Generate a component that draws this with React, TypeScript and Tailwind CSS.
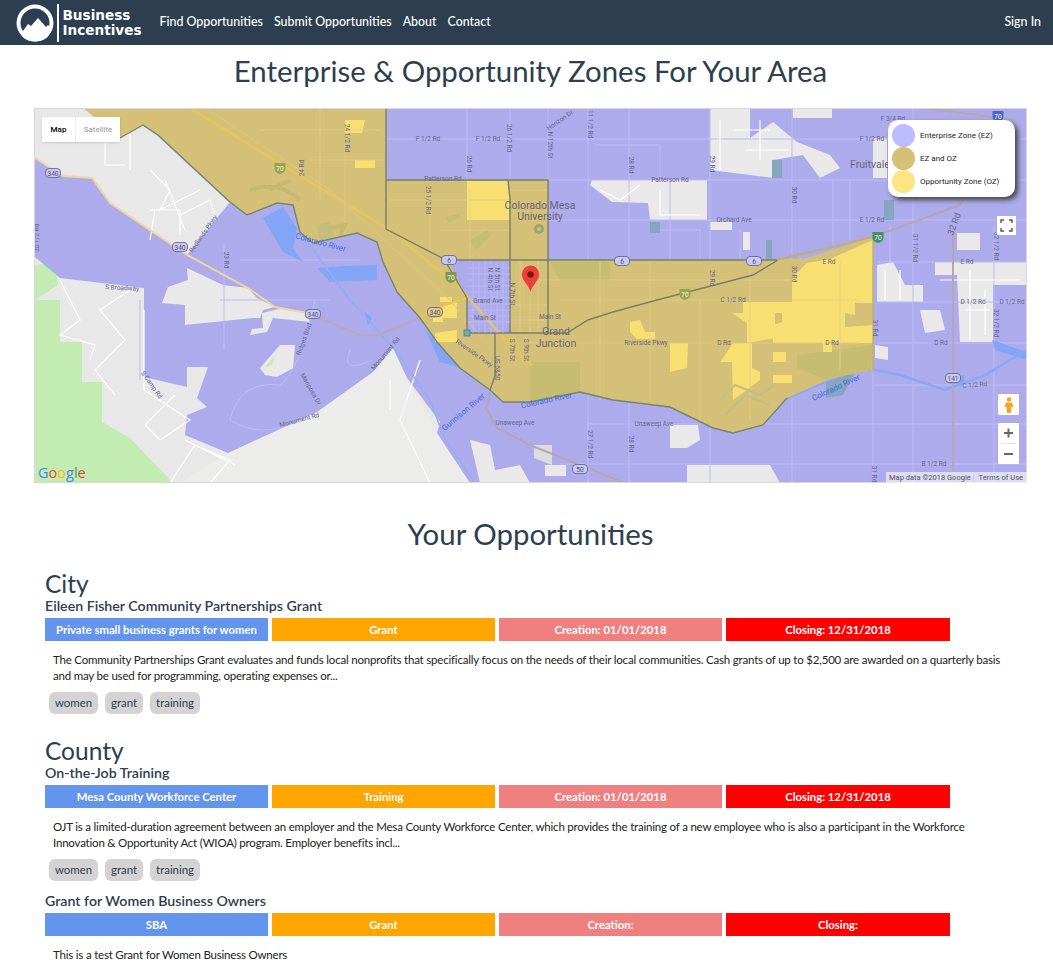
const purple = "35,158 63,176 92,178 110,203 187,255 230,202 230,108 1027,108 1027,483 470,483 437,433 440,422 407,378 393,348 373,372 317,412 228,453 185,435 187,415 207,407 197,398 208,367 187,367 187,387 144,377 144,288 60,278 35,257";

const gold = "83,108 120,138 143,125 158,135 187,162 230,202 247,215 277,203 293,205 300,232 313,243 357,233 377,242 383,262 397,292 420,318 437,342 460,368 490,390 503,402 530,402 580,392 613,400 670,407 713,428 733,433 763,425 787,398 823,382 860,367 873,371 873,237 807,258 777,260 548,260 548,180 386,180 386,108";

const holes = "448,260 510,260 510,333 467,333 467,298";

const grayPatches = [
  "187,268 223,285 248,288 257,298 275,307 263,310 260,318 253,318 185,325 185,305 162,303 168,287 188,280",
  "262,313 283,308 307,313 310,322 273,318 267,332 250,335 252,329 263,328",
  "260,368 280,345 295,345 293,368 277,377 265,375",
  "710,108 750,108 750,138 773,122 797,142 830,155 840,168 820,178 803,155 773,160 773,178 710,170",
  "592,180 707,180 707,220 650,220 648,203 612,202 590,185",
  "710,222 732,222 732,230 710,230",
  "743,232 750,232 750,250 743,250",
  "793,108 832,108 832,118 793,118",
  "877,265 893,262 905,285 923,285 923,302 877,302",
  "935,262 1027,262 1027,285 993,285 993,342 960,342 957,275 935,275",
  "873,138 887,138 887,178 873,178",
  "957,233 980,233 980,250 957,250",
  "670,425 698,425 700,440 687,448 670,448",
  "687,465 770,465 780,483 687,483",
  "470,440 490,445 495,470 520,465 530,483 480,483",
  "875,345 888,347 888,360 875,358",
  "920,310 940,310 945,330 925,333",
  "563,465 566,465 566,476 545,476 545,465",
];

const bluePatches = [
  "263,218 283,207 297,228 293,248 303,262 283,252",
  "317,268 345,266 377,265 377,280 330,282",
  "365,312 372,318 368,325",
  "425,330 437,342 460,368 440,362",
  "950,377 964,375 964,384 950,384",
  "992,340 1027,352 1027,360 995,350",
];

const tealPatches = [
  "826,378 858,367 843,395 826,398",
  "772,160 782,160 782,178 772,178",
  "884,200 894,200 894,220 884,220",
  "650,222 660,222 660,233 650,233",
  "766,240 772,240 772,262 766,262",
];

const yellowPatches = [
  "467,181 508,181 510,220 467,220",
  "345,120 365,120 362,133 345,133",
  "355,160 375,160 375,168 355,168",
  "440,297 452,297 452,302 440,302",
  "437,310 450,303 457,303 457,318 437,318",
  "433,318 443,318 443,322 433,322",
  "435,333 457,330 457,342 435,342",
  "792,278 807,263 830,259 873,240 873,303 855,303 855,315 845,313 845,327 873,325 873,343 832,343 832,352 823,352 823,343 792,343",
  "743,302 792,302 792,343 773,343 773,325 782,322 782,313 775,313 775,338 747,343 747,323 732,313 743,313",
  "733,343 752,343 752,368 760,372 760,380 733,400 732,362 720,362",
  "630,322 640,320 645,332 655,332 655,339 637,339 630,332",
  "670,343 688,343 687,368 670,372",
  "773,352 786,352 786,362 773,362",
  "773,375 792,375 792,383 773,383",
];

const olivePatches = [
  "530,362 580,362 580,393 530,402",
  "550,262 610,262 610,281 560,281",
  "797,355 873,345 871,370 826,380 797,368",
  "470,240 488,230 490,236 476,250",
  "446,217 460,214 460,218 448,222",
];

const lightRoads = [
  "M548 108 V180 M588 108 V483 M629 108 V483 M670 180 V262 M710 108 V483 M792 108 V483 M833 178 V260",
  "M913 108 V483 M873 372 V483 M994 225 V483 M386 108 H548 M386 139 H548 M548 139 H1027 M548 180 H1027",
  "M548 220 H1027 M877 262 H1027 M877 302 H1027 M877 343 H1027 M873 385 H1027 M588 424 H1027 M560 464 H1027",
  "M430 180 V262 M467 108 V180 M510 108 V180 M224 245 V350 M140 380 V300 M240 260 H360 M220 300 H330",
  "M315 300 Q300 370 280 385 Q240 380 230 420 Q260 440 300 420 M350 350 Q340 375 372 360",
  "M595 145 H660 V180 M740 230 V262 M660 230 H700 V262 M850 180 V240 M890 225 V262",
];

const goldRoads = "M548 190 H510 M470 190 V262 M510 200 H390 M510 230 H440 M430 190 V250 M560 300 H860 M600 262 V400 M650 262 V400 M700 300 V420 M750 262 V420 M840 262 V370 M530 280 H790 M530 343 H860 M260 130 H380 M320 108 V200 M345 140 V220 M310 160 H386 M520 260 V333 M530 296 V333 M538 260 V333 M510 305 H548 M510 320 H548";

const grayRoads = [
  "M100 135 H130 V170 M105 140 V165 H125 M150 170 L170 190 L160 210 L200 190 M150 210 H180 V235 M165 180 L185 230 M155 210 L150 240 M180 215 L210 200 L215 215",
  "M60 280 L80 320 L60 335 L95 345 L90 360 M130 290 L100 310 L125 340 L95 370 L115 395 M144 310 V390 L190 420 L160 440 L145 425 L175 395",
  "M170 483 L195 445 L230 460 L210 483 M185 440 L235 465 M390 380 V410 M420 360 L400 420 L430 483",
  "M720 120 V170 M735 130 H770 M745 150 H790 M760 120 V160 M600 190 L620 200 L640 185 M660 190 V215 H700",
  "M885 270 V300 M900 270 V300 M940 280 H1020 M970 270 V340 M985 290 V335 M965 310 H990",
];

const labels: [number, number, string, number?][] = [
  [428, 141, "F 1/2 Rd"], [488, 141, "F 1/2 Rd"], [443, 181, "Patterson Rd"], [670, 182, "Patterson Rd"],
  [734, 222, "Orchard Ave"], [872, 222, "E 1/2 Rd"], [872, 141, "F 1/2 Rd"], [893, 121, "F 3/4 Rd"],
  [829, 264, "E Rd"], [967, 264, "E Rd"], [973, 304, "D 1/2 Rd"], [1012, 304, "D 1/2 Rd"],
  [724, 345, "D Rd"], [832, 345, "D Rd"], [941, 345, "D Rd"], [975, 387, "C 1/2 Rd", -5],
  [934, 466, "B 1/2 Rd"], [646, 345, "Riverside Pkwy"], [654, 426, "Unaweep Ave"], [515, 425, "Unaweep Ave"],
  [485, 320, "Main St"], [550, 319, "Main St"], [488, 303, "Grand Ave"], [122, 290, "S Broadway", 3],
  [304, 168, "24 Rd", -90], [345, 138, "24 1/2 Rd", 90], [426, 200, "25 1/2 Rd", 90], [467, 164, "26 Rd", 90],
  [507, 138, "26 1/2 Rd", 90], [224, 260, "23 Rd", 90], [39, 238, "20 1/2 Rd", -90], [495, 279, "N 5th St", 90],
  [488, 279, "N 4th St", 90], [510, 294, "N 7th St", 90], [548, 145, "N 12th St", 90], [588, 124, "11 1/2 Rd", 90],
  [629, 165, "28 Rd", 90], [710, 164, "29 Rd", 90], [792, 195, "30 Rd", 90], [710, 278, "29 Rd", 90],
  [792, 274, "30 Rd", 90], [913, 248, "31 1/2 Rd", 90], [994, 246, "32 1/2 Rd", 90], [994, 323, "32 1/2 Rd", 90],
  [873, 328, "31 Rd", 90], [588, 444, "27 1/2 Rd", 90], [629, 444, "28 Rd", 90], [872, 474, "31 Rd", 90],
  [205, 235, "Redlands Pkwy", -55], [306, 340, "Ridges Blvd", -70], [309, 390, "Mariposa Dr", 60],
  [300, 422, "Monument Rd", -15], [387, 355, "Monument Rd", -50], [150, 386, "S Camp Rd", 55],
  [473, 355, "Riverside Pkwy", 35], [510, 350, "S 7th St", 90], [524, 350, "S 9th St", 90], [495, 368, "US 6&50", 90],
  [733, 302, "C 1/2 Rd"], [561, 122, "Horizon Dr", -35],
];

const riverLabels: [number, number, string, number][] = [
  [320, 245, "Colorado River", 15], [547, 403, "Colorado River", -12], [837, 390, "Colorado River", -25], [465, 414, "Gunnison River", -40],
];

const shields: [number, number, string, string][] = [
  [53, 173, "340", "#c9c8f2"], [180, 247, "340", "#c9c8f2"], [313, 314, "340", "#c9c8f2"], [435, 312, "340", "#dcca84"],
  [449, 260, "6", "#c9c8f2"], [622, 261, "6", "#c9c8f2"], [754, 261, "6", "#c9c8f2"], [953, 378, "141", "#c9c8f2"], [580, 469, "50", "#c9c8f2"],
];

const interstates: [number, number, string][] = [
  [280, 168, "#98a64b"], [451, 277, "#7f9a4d"], [685, 294, "#98a64b"], [878, 237, "#3f8f6d"], [998, 116, "#4a68c8"],
];

const mapTextFont = { fontFamily: "Roboto, sans-serif" };

function MapDrawing() {
  return (
    <svg viewBox="34 108 993 375" width="993" height="375" className="block">
      <rect x="34" y="108" width="993" height="375" fill="#e8e8e8" />
      {/* parks down the left side */}
      <polygon points="35,300 60,300 60,342 82,342 82,382 102,382 102,422 130,438 173,483 35,483" fill="#c3ecb2" />
      <polygon points="35,265 55,262 58,285 35,300" fill="#c3ecb2" />
      <polygon points="373,372 393,348 407,378 437,433 470,483 180,483 228,453 317,412" fill="#ececea" />

      <polygon points={purple} fill="#adabec" />
      {grayPatches.map((p) => (
        <polygon key={p} points={p} fill="#e9e9e9" />
      ))}
      <polygon points="265,367 277,353 272,365" fill="#c3ecb2" />
      <polygon points="534,445 552,445 552,465 534,458" fill="#dcdcdc" />

      {lightRoads.map((d) => (
        <path key={d} d={d} fill="none" stroke="#bdbcf5" strokeWidth="1" />
      ))}
      {grayRoads.map((d) => (
        <path key={d} d={d} fill="none" stroke="#fff" strokeWidth="1.2" />
      ))}
      {bluePatches.map((p) => (
        <polygon key={p} points={p} fill="#82a5f5" />
      ))}
      {tealPatches.map((p) => (
        <polygon key={p} points={p} fill="#86a6bf" />
      ))}

      {/* rivers */}
      <path d="M143 125 L158 135 L187 162 L230 202" fill="none" stroke="#9fc5f7" strokeWidth="2" />
      <path d="M300 232 L350 300 L395 350 L430 400 L445 440 L475 483" fill="none" stroke="#8fb0f5" strokeWidth="1.5" />
      <path d="M787 398 L860 367 L900 375 L945 390 L985 375 L1027 350" fill="none" stroke="#86a9f5" strokeWidth="2.5" />
      <path d="M530 402 L580 392 L613 400" fill="none" stroke="#86a9f5" strokeWidth="2" />

      {/* roads under the zones */}
      <path d="M35 158 L63 176 L92 178 L110 203 L187 255 L248 288 L275 307 L307 313" fill="none" stroke="#ecd79a" strokeWidth="2" />
      <path d="M307 313 L360 335 L378 335 L420 318 L467 298" fill="none" stroke="#b8a9b8" strokeWidth="2" />
      <path d="M777 260 L873 237 L960 205 L963 200" fill="none" stroke="#b5a6b0" strokeWidth="2" />
      <path d="M925 108 L1015 120" fill="none" stroke="#b5a6b0" strokeWidth="2" />
      <path d="M953 232 V483" stroke="#b5a6b0" strokeWidth="2" />
      <path d="M490 392 L486 408 L497 428 L530 445 L625 483" fill="none" stroke="#b5a6b0" strokeWidth="2" />

      {/* zones */}
      <path d={`M${gold.split(" ").join(" L")} Z M${holes.split(" ").join(" L")} Z`} fillRule="evenodd" fill="#d5c077" />
      {olivePatches.map((p) => (
        <polygon key={p} points={p} fill="#c6bd70" />
      ))}
      <path d="M270 190 L290 180 M340 235 L345 225 L325 230 M250 190 Q280 180 300 200" fill="none" stroke="#c5b972" strokeWidth="4" />
      <polygon points="316,225 330,222 335,237 320,240" fill="#c4bd7c" />
      {yellowPatches.map((p) => (
        <polygon key={p} points={p} fill="#f8df72" />
      ))}
      <path d={goldRoads} fill="none" stroke="#dfcd8a" strokeWidth="0.8" />
      <path d="M190 108 L300 176 L387 228 L457 285 L510 345 L532 365" fill="none" stroke="#e4c55c" strokeWidth="2.5" />
      <path d="M205 108 L330 190 L450 300 L500 360" fill="none" stroke="#dcc67c" strokeWidth="1" />
      <path d="M420 318 L445 305 L467 298" fill="none" stroke="#e6c84a" strokeWidth="2" />
      <path d="M720 400 L735 385 L760 395 L775 385 M725 415 L745 395 L770 405" fill="none" stroke="#c4bf86" strokeWidth="2" />

      {/* zone boundaries */}
      <path
        d={`M${gold.split(" ").slice(1, 28).join(" L")}`}
        fill="none"
        stroke="#75866f"
        strokeWidth="1.4"
      />
      <path
        d="M386 108 V229 L444 259 L467 298 V333 H567 L588 320 L613 312 L657 300 L753 275 L778 260 H448 M386 180 H548 V333 M508 181 L510 198 V333 M495 333 V376 L490 390"
        fill="none"
        stroke="#75806b"
        strokeWidth="1.4"
      />
      <path d="M777 260 L873 237 V371" fill="none" stroke="#c2b45a" strokeWidth="1.4" />

      {/* downtown street grid */}
      <path
        d="M473 262 V333 M479 262 V333 M485 262 V333 M491 262 V333 M497 262 V333 M503 262 V333 M468 268 H510 M468 274 H510 M468 280 H510 M468 286 H510 M468 292 H510 M468 298 H510 M468 304 H510 M468 310 H510 M468 316 H510 M468 322 H510"
        fill="none"
        stroke="#bdbcf5"
        strokeWidth="0.8"
      />
      <rect x="464" y="330" width="6" height="6" fill="#79b27a" stroke="#3b6fe0" strokeWidth="0.8" />

      {labels.map(([x, y, text, rot]) => (
        <text
          key={`${x}-${y}`}
          x={x}
          y={y}
          textAnchor="middle"
          fontSize="6.5"
          fill="#66668a"
          style={mapTextFont}
          transform={rot ? `rotate(${rot} ${x} ${y})` : undefined}
        >
          {text}
        </text>
      ))}
      {riverLabels.map(([x, y, text, rot]) => (
        <text
          key={`${x}-${y}`}
          x={x}
          y={y}
          textAnchor="middle"
          fontSize="8"
          fill="#3f6fe0"
          style={mapTextFont}
          transform={`rotate(${rot} ${x} ${y})`}
        >
          {text}
        </text>
      ))}
      <g fontSize="10.5" fill="#66667a" textAnchor="middle" style={mapTextFont}>
        <text x="556" y="335">Grand</text>
        <text x="556" y="347">Junction</text>
        <text x="540" y="209">Colorado Mesa</text>
        <text x="540" y="220">University</text>
        <text x="870" y="168">Fruitvale</text>
      </g>
      <text x="957" y="225" fontSize="9" fill="#66668a" textAnchor="middle" transform="rotate(-70 957 225)" style={mapTextFont}>32 Rd</text>
      <circle cx="539" cy="229" r="5" fill="#9aa56f" />
      <circle cx="539" cy="229" r="2" fill="#d5c077" />

      {shields.map(([x, y, text, color]) => (
        <g key={`${x}-${y}`}>
          <rect x={x - 7.5} y={y - 4.5} width="15" height="9" rx="3.5" fill={color} stroke="#50507a" strokeWidth="0.7" />
          <text x={x} y={y + 2.5} textAnchor="middle" fontSize="6.5" fill="#50507a" style={mapTextFont}>{text}</text>
        </g>
      ))}
      {interstates.map(([x, y, color]) => (
        <g key={`${x}-${y}`}>
          <path d={`M${x - 5.5} ${y - 5} H${x + 5.5} V${y + 1} Q${x + 5} ${y + 5} ${x} ${y + 6} Q${x - 5} ${y + 5} ${x - 5.5} ${y + 1} Z`} fill={color} />
          <text x={x} y={y + 2.5} textAnchor="middle" fontSize="6.5" fill="#f4f4e8" style={mapTextFont}>70</text>
        </g>
      ))}

      {/* marker */}
      <path d="M530.5 293 C528 284 521.5 281 521.5 274.5 A9 9.5 0 0 1 539.5 274.5 C539.5 281 533 284 530.5 293 Z" fill="#ea4335" stroke="#f6c9c5" strokeWidth="0.6" />
      <circle cx="530.5" cy="274.5" r="3.2" fill="#7b1510" />

      <text x="38" y="478" fontSize="14.5" fontWeight="500" style={{ fontFamily: "'Open Sans', sans-serif" }}>
        <tspan fill="#4285f4">G</tspan>
        <tspan fill="#ea4335">o</tspan>
        <tspan fill="#fbbc05">o</tspan>
        <tspan fill="#4285f4">g</tspan>
        <tspan fill="#34a853">l</tspan>
        <tspan fill="#ea4335">e</tspan>
      </text>
      <rect x="34.5" y="108.5" width="992" height="374" fill="none" stroke="#d8d8d8" />
    </svg>
  );
}

function MapPanel() {
  return (
    <div className="relative ml-[34px] h-[375px] w-[993px] overflow-hidden font-['Roboto',sans-serif]">
      <MapDrawing />
      <div className="absolute left-[8px] top-[9px] flex h-[25px] w-[78px] items-center rounded-[1px] bg-white text-[8px] shadow-sm">
        <span className="w-[33px] text-center font-medium text-black">Map</span>
        <span className="flex-1 border-l border-[#eee] text-center leading-[25px] text-[#999]">Satellite</span>
      </div>
      <div className="absolute left-[854px] top-[12px] flex h-[77px] w-[127px] flex-col justify-center rounded-[10px] bg-white pl-[4px] shadow-[3px_3px_5px_#444]">
        {[
          ["Enterprise Zone (EZ)", "bg-[#bdbcff]"],
          ["EZ and OZ", "bg-[#d5c077]"],
          ["Opportunity Zone (OZ)", "bg-[#fde581]"],
        ].map(([name, color]) => (
          <div key={name} className="flex h-[23px] items-center text-[8px] text-[#222]">
            <span className={`mr-[5px] h-[23px] w-[23px] rounded-full ${color}`} />
            {name}
          </div>
        ))}
      </div>
      <div className="absolute left-[963px] top-[108px] flex h-[19px] w-[19px] items-center justify-center bg-white">
        <svg width="13" height="13" viewBox="0 0 13 13" fill="none" stroke="#555" strokeWidth="1.4">
          <path d="M1 4V1H4M9 1H12V4M12 9V12H9M4 12H1V9" />
        </svg>
      </div>
      <div className="absolute left-[964px] top-[286px] flex h-[21px] w-[21px] items-center justify-center rounded-[1px] bg-white">
        <svg width="10" height="16" viewBox="0 0 10 16" fill="#f0a820">
          <circle cx="5" cy="2.5" r="2.3" />
          <path d="M2 5.5H8L9.5 10H7.5L7 16H3L2.5 10H.5Z" />
        </svg>
      </div>
      <div className="absolute left-[964px] top-[315px] flex h-[41px] w-[21px] flex-col items-center rounded-[1px] bg-white">
        <svg width="21" height="20" viewBox="0 0 21 20" stroke="#666" strokeWidth="2">
          <path d="M6 10H15M10.5 5.5V14.5" />
        </svg>
        <span className="h-px w-[15px] bg-[#e6e6e6]" />
        <svg width="21" height="20" viewBox="0 0 21 20" stroke="#666" strokeWidth="2">
          <path d="M6 10H15" />
        </svg>
      </div>
      <div className="absolute bottom-0 right-0 flex h-[11px] w-[141px] items-center justify-between bg-white/60 px-[3px] text-[7.5px] leading-none text-[#555]">
        <span>Map data ©2018 Google</span>
        <span className="mr-[1px] border-l border-[#ccc] pl-[5px]">Terms of Use</span>
      </div>
    </div>
  );
}

function Logo() {
  return (
    <div className="flex items-center">
      <svg width="38" height="38" viewBox="0 0 38 38" className="ml-[16px]">
        <circle cx="19" cy="19" r="18.5" fill="#fff" />
        <circle cx="19" cy="19" r="14.5" fill="#2c3e50" />
        <path d="M3 25 L7 27 L12 20 L15 22 L22 14 L30 23 L32 21 L36 25 Q32 37.5 19 37.5 Q6 37.5 3 25 Z" fill="#fff" />
      </svg>
      <span className="ml-[3px] h-[38px] w-[1.5px] bg-white" />
      <div className="ml-[4px] w-[79px] font-['DejaVu_Sans',sans-serif] text-[13.6px] font-bold leading-[15px] text-white">
        <div>Business</div>
        <div>Incentives</div>
      </div>
    </div>
  );
}

const barColors = ["bg-[#6495ed]", "bg-[#ffa500]", "bg-[#f08080]", "bg-[#ff0000]"];

function Listing({
  title,
  bars,
  text,
  tags = true,
}: {
  title: string;
  bars: string[];
  text: string;
  tags?: boolean;
}) {
  return (
    <div>
      <h4 className="h-[20px] text-[14.2px] font-semibold leading-[20px] text-[#2c3e50]">{title}</h4>
      <div className="mt-[2px] flex gap-[4px]">
        {bars.map((bar, i) => (
          <div
            key={i}
            className={`h-[23px] w-[223px] text-center text-[11.3px] font-bold leading-[23px] text-white last:w-[224px] ${barColors[i]}`}
          >
            {bar}
          </div>
        ))}
      </div>
      <p className="mt-[11px] w-[967px] pl-[8px] text-[11.5px] leading-[16px] tracking-[-0.2px] text-[#222]">{text}</p>
      {tags && (
        <div className="ml-[4px] mt-[8px] flex gap-[7px]">
          {["women", "grant", "training"].map((tag) => (
            <span key={tag} className="flex h-[22px] items-center rounded-[6px] bg-[#d3d3d3] px-[6px] text-[11.4px] text-[#2c3e50]">
              {tag}
            </span>
          ))}
        </div>
      )}
    </div>
  );
}

export default function App() {
  return (
    <div className="h-[964px] w-[1053px] overflow-hidden bg-white font-['Lato',sans-serif] text-[#2c3e50]">
      <header className="flex h-[45px] items-center bg-[#2c3e50] pr-[12px] text-white">
        <Logo />
        <nav className="ml-[18px] flex gap-[11px] text-[12.4px] font-medium">
          <span>Find Opportunities</span>
          <span>Submit Opportunities</span>
          <span>About</span>
          <span>Contact</span>
        </nav>
        <span className="ml-auto text-[12.4px] font-medium">Sign In</span>
      </header>
      <h1 className="h-[63px] pl-[8px] text-center text-[29.4px] leading-[51px]">Enterprise &amp; Opportunity Zones For Your Area</h1>
      <MapPanel />
      <h2 className="mt-[32px] h-[38px] pl-[8px] text-center text-[29.4px] leading-[38px]">Your Opportunities</h2>
      <div className="ml-[45px] mt-[19px]">
        <h3 className="h-[24px] text-[24.5px] leading-[24px]">City</h3>
        <Listing
          title="Eileen Fisher Community Partnerships Grant"
          bars={["Private small business grants for women", "Grant", "Creation: 01/01/2018", "Closing: 12/31/2018"]}
          text="The Community Partnerships Grant evaluates and funds local nonprofits that specifically focus on the needs of their local communities. Cash grants of up to $2,500 are awarded on a quarterly basis and may be used for programming, operating expenses or..."
        />
        <h3 className="mt-[25px] h-[24px] text-[24.5px] leading-[24px]">County</h3>
        <Listing
          title="On-the-Job Training"
          bars={["Mesa County Workforce Center", "Training", "Creation: 01/01/2018", "Closing: 12/31/2018"]}
          text="OJT is a limited-duration agreement between an employer and the Mesa County Workforce Center, which provides the training of a new employee who is also a participant in the Workforce Innovation & Opportunity Act (WIOA) program. Employer benefits incl..."
        />
        <div className="mt-[10px]">
          <Listing
            title="Grant for Women Business Owners"
            bars={["SBA", "Grant", "Creation:", "Closing:"]}
            text="This is a test Grant for Women Business Owners"
            tags={false}
          />
        </div>
      </div>
    </div>
  );
}
